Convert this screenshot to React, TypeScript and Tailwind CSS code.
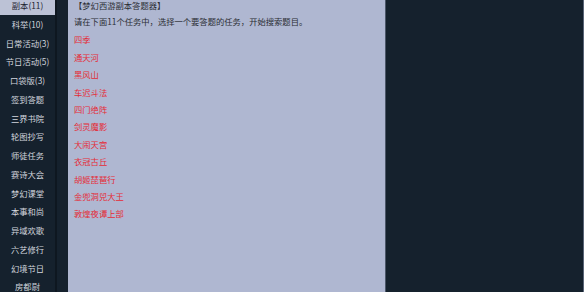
const menu = [
  "副本(11)",
  "科举(10)",
  "日常活动(3)",
  "节日活动(5)",
  "口袋版(3)",
  "签到答题",
  "三界书院",
  "轮图抄写",
  "师徒任务",
  "赛诗大会",
  "梦幻课堂",
  "本事和尚",
  "异域欢歌",
  "六艺修行",
  "幻境节日",
  "房都尉",
];

const tasks = [
  "四季",
  "通天河",
  "黑风山",
  "车迟斗法",
  "四门绝阵",
  "剑灵魔影",
  "大闹天宫",
  "衣冠古丘",
  "胡姬琵琶行",
  "金兜洞兕大王",
  "敦煌夜谭上部",
];

export default function App() {
  return (
    <div
      className="flex h-[292px] w-[584px] overflow-hidden bg-[#15212d] text-[8.3px]"
      style={{ fontFamily: '"Noto Sans CJK SC", "Noto Sans", sans-serif' }}
    >
      <div className="w-[57px] shrink-0 border-r-2 border-[#0e1720]">
        <ul className="-mt-[4px]">
          {menu.map((item, i) => (
            <li
              key={item}
              className={
                i === 0
                  ? "flex h-[18.75px] items-center justify-center bg-[#bcc2d6] text-[#1e2430]"
                  : "flex h-[18.75px] items-center justify-center text-[#d2d6de]"
              }
            >
              {item}
            </li>
          ))}
        </ul>
      </div>
      <div className="ml-[11px] w-[318px] shrink-0 border-r border-[#4b5668] bg-[#afb7d1] pl-[6px]">
        <div className="-mt-[3px] text-[#2b2d33]">
          <p className="leading-[16px]">【梦幻西游副本答题器】</p>
          <p className="leading-[16px]">请在下面11个任务中，选择一个要答题的任务，开始搜索题目。</p>
        </div>
        <ul className="mt-[2px]">
          {tasks.map((t) => (
            <li key={t} className="flex h-[17.4px] items-center text-[#e52b36]">
              {t}
            </li>
          ))}
        </ul>
      </div>
      <div className="flex-1 border-r border-[#5a6577]" />
    </div>
  );
}
